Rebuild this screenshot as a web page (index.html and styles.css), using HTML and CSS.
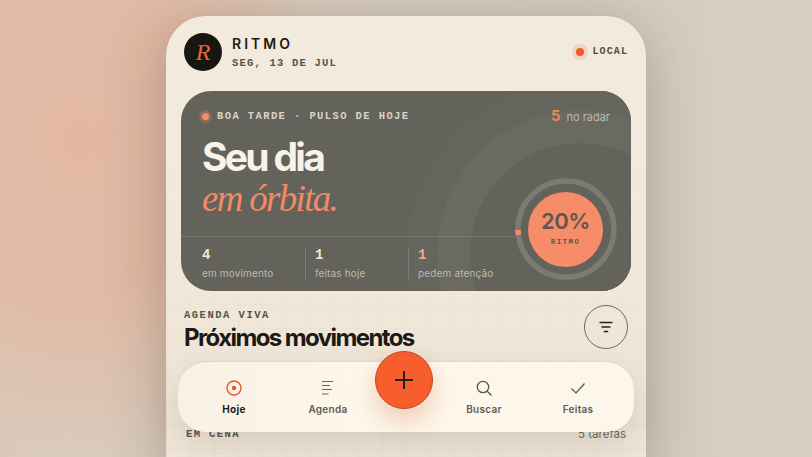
FILE: index.html
```html
<!DOCTYPE html>
<html lang="pt">
<head>
<meta charset="utf-8">
<title>Ritmo</title>
<link rel="stylesheet" href="styles.css">
</head>
<body>
<div class="glow"></div>
<main class="phone">
  <header class="top">
    <div class="logo">R</div>
    <div class="brand">
      <div class="brand-name">RITMO</div>
      <div class="brand-date">SEG, 13 DE JUL</div>
    </div>
    <div class="local"><span class="local-dot"></span><span>LOCAL</span></div>
  </header>

  <section class="hero">
    <div class="orbit orbit-a"></div>
    <div class="orbit orbit-b"></div>
    <div class="orbit orbit-c"></div>
    <div class="hero-top">
      <div class="pulse"><span class="pulse-dot"></span><span>BOA TARDE · PULSO DE HOJE</span></div>
      <div class="radar"><b>5</b><span>no radar</span></div>
    </div>
    <h1 class="hero-title">Seu dia</h1>
    <div class="hero-sub">em órbita.</div>
    <div class="stats">
      <div class="stat stat-first"><b>4</b><span>em movimento</span></div>
      <div class="stat stat-mid"><b>1</b><span>feitas hoje</span></div>
      <div class="stat stat-last"><b class="warm">1</b><span>pedem atenção</span></div>
    </div>
    <div class="gauge">
      <svg class="gauge-ring" width="102" height="102" viewBox="0 0 102 102">
        <circle cx="51" cy="51" r="48" fill="none" stroke="#7a7b71" stroke-width="5.5"/>
        <path d="M3.400 57 A48 48 0 0 1 3 52" fill="none" stroke="#f78c68" stroke-width="5.5"/>
      </svg>
      <div class="gauge-core">
        <div class="gauge-num">20%</div>
        <div class="gauge-label">RITMO</div>
      </div>
    </div>
  </section>

  <section class="agenda">
    <div class="agenda-text">
      <div class="eyebrow">AGENDA VIVA</div>
      <h2 class="agenda-title">Próximos movimentos</h2>
    </div>
    <button class="filter" aria-label="Filtrar">
      <svg width="14" height="12" viewBox="0 0 14 12"><path d="M0.500 1.500h13M2.500 6h9M4.800 10.500h4.400" fill="none" stroke="#23211c" stroke-width="1.400"/></svg>
    </button>
  </section>

  <div class="scene">
    <span class="scene-name">EM CENA</span>
    <span class="scene-count">5 tarefas</span>
  </div>
</main>

<nav class="nav">
  <a class="nav-item active">
    <svg width="18" height="18" viewBox="0 0 18 18"><circle cx="9" cy="9" r="7" fill="none" stroke="#e8572c" stroke-width="1.400"/><circle cx="9" cy="9" r="2.200" fill="#e8572c"/></svg>
    <span>Hoje</span>
  </a>
  <a class="nav-item">
    <svg width="18" height="18" viewBox="0 0 18 18"><path d="M3 2.500h11M3 6.500h8M3 10.500h10M3 15h6.500" fill="none" stroke="#6a665c" stroke-width="1.200"/></svg>
    <span>Agenda</span>
  </a>
  <div class="nav-gap"></div>
  <a class="nav-item">
    <svg width="18" height="18" viewBox="0 0 18 18"><circle cx="8" cy="8" r="5.700" fill="none" stroke="#5b574e" stroke-width="1.300"/><path d="M12.200 12.200L16.500 16.500" stroke="#5b574e" stroke-width="1.300" fill="none"/></svg>
    <span>Buscar</span>
  </a>
  <a class="nav-item">
    <svg width="18" height="18" viewBox="0 0 18 18"><path d="M2.500 9.500L7 14L15.500 4.500" fill="none" stroke="#5b574e" stroke-width="1.200"/></svg>
    <span>Feitas</span>
  </a>
  <button class="fab" aria-label="Adicionar">
    <svg width="22" height="22" viewBox="0 0 22 22"><path d="M11 2v18M2 11h18" stroke="#23201a" stroke-width="2" fill="none"/></svg>
  </button>
</nav>
</body>
</html>
```
FILE: styles.css
```css
* { box-sizing: border-box; }
html, body { margin: 0; height: 100%; }
body {
  height: 457px;
  overflow: hidden;
  position: relative;
  background: linear-gradient(90deg, #dac9b9 0%, #d8cdbf 35%, #d4cdc1 70%, #d5cfc4 100%);
  font-family: Inter, "Liberation Sans", sans-serif;
  color: #1c1a16;
}
.glow {
  position: absolute;
  left: -180px;
  top: -170px;
  width: 520px;
  height: 620px;
  background: radial-gradient(closest-side, #e2b8a3 0%, rgba(226, 184, 163, 0.92) 50%, rgba(226, 184, 163, 0) 100%);
}
.phone {
  position: relative;
  width: 480px;
  height: 460px;
  margin: 16px 0 0 166px;
  padding-top: 17px;
  border-radius: 40px 40px 0 0;
  overflow: hidden;
  background-color: #f2eadd;
  box-shadow: 0 10px 60px rgba(70, 45, 25, 0.3);
}
.phone::before {
  content: "";
  position: absolute;
  inset: 0;
  background-image:
    linear-gradient(rgba(90, 75, 50, 0.035) 1px, transparent 1px),
    linear-gradient(90deg, rgba(90, 75, 50, 0.035) 1px, transparent 1px);
  background-size: 24px 24px;
  background-color: rgba(120, 100, 70, 0.03);
  -webkit-mask-image: linear-gradient(180deg, transparent 30%, #000 85%);
  mask-image: linear-gradient(180deg, transparent 30%, #000 85%);
}
.top {
  position: relative;
  display: flex;
  align-items: center;
  padding: 0 18px;
  height: 38px;
}
.logo {
  width: 38px;
  height: 38px;
  border-radius: 50%;
  background: #17160f;
  color: #f0623a;
  font: italic 24px/38px "Liberation Serif", serif;
  text-align: center;
}
.brand { margin-left: 10px; }
.brand-name {
  font-size: 14px;
  line-height: 17px;
  margin-top: -1px;
  font-weight: 600;
  letter-spacing: 3px;
  color: #1c1a16;
}
.brand-date {
  margin-top: 5px;
  font: 700 10.500px/12px "Liberation Mono", monospace;
  letter-spacing: 1.200px;
  color: #57534a;
}
.local {
  margin-left: auto;
  display: flex;
  align-items: center;
  gap: 4px;
  font: 700 10px/12px "Liberation Mono", monospace;
  letter-spacing: 1.100px;
  color: #4f4b43;
}
.local-dot {
  width: 8px;
  height: 8px;
  margin: 4px;
  border-radius: 50%;
  background: #f4582a;
  box-shadow: 0 0 0 4px rgba(244, 88, 42, 0.16);
}
.hero {
  position: relative;
  margin: 20px 15px 0;
  height: 200px;
  border-radius: 30px;
  overflow: hidden;
  background-color: #64635b;
  color: #f5efe4;
}
.orbit {
  position: absolute;
  left: 399px;
  top: 162px;
  border-radius: 50%;
  transform: translate(-50%, -50%);
}
.orbit-a { width: 346px; height: 346px; background: #66655d; }
.orbit-b { width: 286px; height: 286px; background: #6b6a61; }
.orbit-c { width: 220px; height: 220px; background: #64635b; }
.hero-top {
  position: relative;
  display: flex;
  justify-content: space-between;
  padding: 17px 21px 0 21px;
  height: 43px;
}
.pulse {
  display: flex;
  align-items: center;
  gap: 8px;
  height: 16px;
  font: 700 10.500px/16px "Liberation Mono", monospace;
  letter-spacing: 1.400px;
  color: #d9d3c6;
}
.pulse-dot {
  width: 7px;
  height: 7px;
  border-radius: 50%;
  background: #f78c68;
  box-shadow: 0 0 0 3px rgba(247, 140, 104, 0.25);
}
.radar {
  display: flex;
  align-items: baseline;
  gap: 6px;
  font-size: 11px;
  line-height: 18px;
  color: #bdb9ae;
  margin-top: -1px;
}
.radar b {
  font-weight: 600;
  font-size: 15px;
  color: #ee8a66;
}
.hero-title {
  position: relative;
  margin: 1px 0 0 21px;
  font-size: 39px;
  line-height: 44px;
  font-weight: 700;
  letter-spacing: -2.700px;
  color: #f8f3ea;
}
.hero-sub {
  position: relative;
  margin: 0 0 0 21px;
  font: italic 37px/40px "Liberation Serif", serif;
  letter-spacing: -1.700px;
  color: #f28a66;
}
.stats {
  position: absolute;
  left: 0;
  top: 145px;
  width: 334px;
  height: 55px;
  display: flex;
  border-top: 1px solid rgba(255, 255, 255, 0.12);
  padding-top: 10px;
}
.stat {
  display: flex;
  flex-direction: column;
  height: 33px;
  padding-left: 9px;
  border-left: 1px solid rgba(255, 255, 255, 0.16);
}
.stat-first { border-left: 0; padding-left: 21px; width: 124px; }
.stat-mid { width: 103px; }
.stat b {
  font: 700 14px/17px "Liberation Mono", monospace;
  color: #ece6d9;
}
.stat b.warm { color: #f5a98c; }
.stat span {
  margin-top: 3px;
  font-size: 10px;
  line-height: 13px;
  letter-spacing: 0.15px;
  white-space: nowrap;
  color: #bdb9ae;
}
.gauge {
  position: absolute;
  left: 333.500px;
  top: 87px;
  width: 102px;
  height: 102px;
}
.gauge-ring { display: block; }
.gauge-core {
  position: absolute;
  left: 13.500px;
  top: 13.500px;
  width: 75px;
  height: 75px;
  border-radius: 50%;
  background: #f78c68;
  color: #5a5850;
  text-align: center;
  padding-top: 17px;
}
.gauge-num {
  font-size: 22px;
  line-height: 24px;
  font-weight: 600;
  letter-spacing: -0.5px;
}
.gauge-label {
  margin-top: 4px;
  font: 700 7.500px/10px "Liberation Mono", monospace;
  letter-spacing: 1.400px;
}
.agenda {
  position: relative;
  display: flex;
  justify-content: space-between;
  align-items: flex-start;
  padding: 14px 18px 0;
  height: 72px;
}
.eyebrow {
  margin-top: 4px;
  font: 700 10.500px/12px "Liberation Mono", monospace;
  letter-spacing: 1.500px;
  color: #57534a;
}
.agenda-title {
  margin: 3px 0 0;
  font-size: 24px;
  line-height: 28px;
  font-weight: 700;
  letter-spacing: -1.600px;
  color: #1c1a16;
}
.filter {
  width: 44px;
  height: 44px;
  padding: 0;
  border: 1px solid #6f6a60;
  border-radius: 50%;
  background: transparent;
  display: flex;
  align-items: center;
  justify-content: center;
}
.scene {
  position: relative;
  display: flex;
  justify-content: space-between;
  align-items: center;
  padding: 0 20px;
  margin-top: 64px;
  height: 14px;
}
.scene-name {
  font: 700 10.500px/14px "Liberation Mono", monospace;
  letter-spacing: 1.400px;
  color: #57534a;
}
.scene-count {
  font-size: 11.500px;
  line-height: 14px;
  color: #6a665c;
}
.nav {
  position: absolute;
  left: 178px;
  top: 361px;
  width: 456px;
  height: 71px;
  display: flex;
  align-items: flex-start;
  padding: 18px 9px 0;
  border-radius: 28px;
  background: linear-gradient(90deg, #f8f1e5 0%, #fdf7eb 40%);
  box-shadow: 0 12px 30px rgba(70, 55, 35, 0.14), inset 0 1px 0 rgba(120, 110, 90, 0.22);
}
.nav-item {
  flex: 1;
  display: flex;
  flex-direction: column;
  align-items: center;
  gap: 5px;
  font-size: 10px;
  line-height: 14px;
  font-weight: 600;
  letter-spacing: 0.3px;
  color: #5f5b52;
}
.nav-item.active { color: #1f1d18; font-weight: 700; }
.nav-gap { flex: 0 0 62px; }
.fab {
  position: absolute;
  left: 197px;
  top: -10px;
  width: 58px;
  height: 58px;
  padding: 0;
  border: 1px solid #bd4a26;
  border-radius: 50%;
  background: #f85d2e;
  display: flex;
  align-items: center;
  justify-content: center;
  box-shadow: 0 12px 24px rgba(200, 90, 40, 0.28);
}
```
